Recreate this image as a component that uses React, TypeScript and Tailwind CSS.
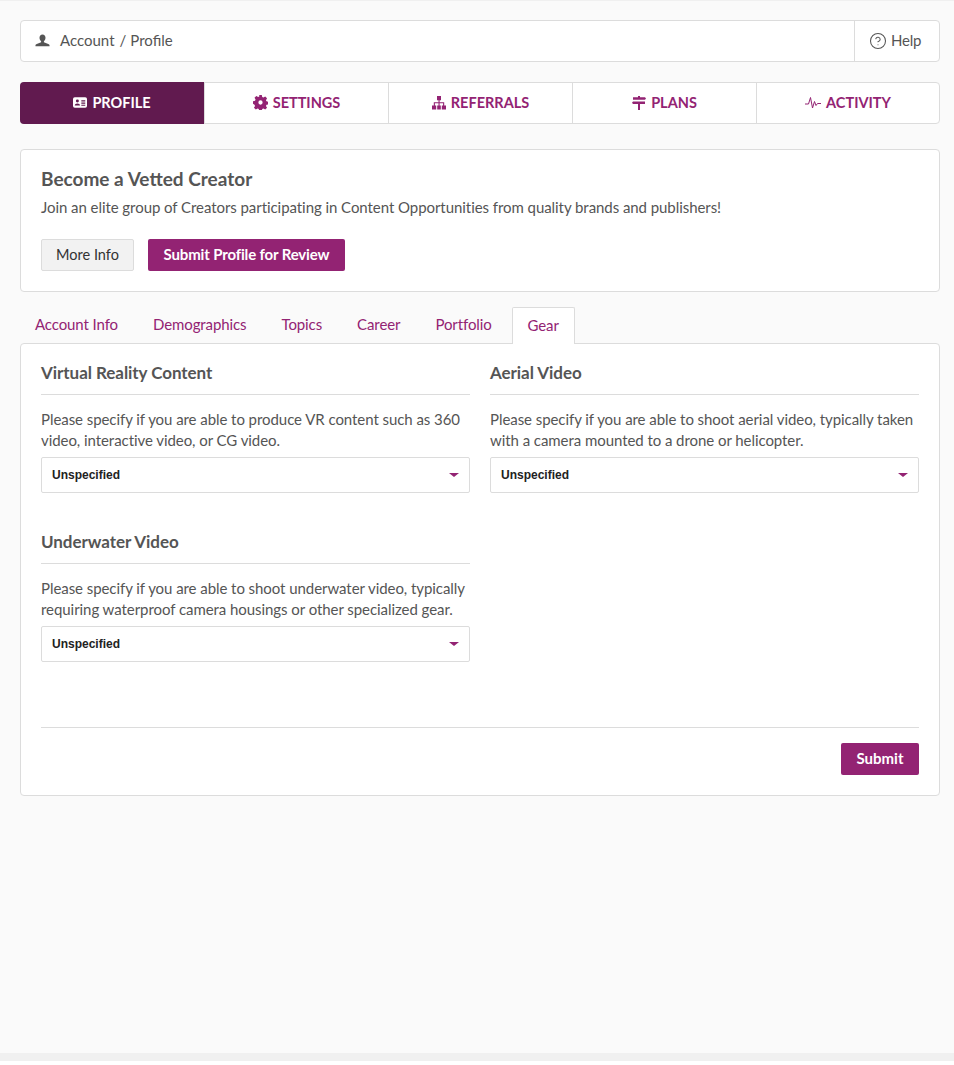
import React from 'react';
import { CircleHelp } from 'lucide-react';

const UserIcon = () => (
    <svg viewBox="0 0 16 16" className="w-[15px] h-[15px] fill-[#555555]">
        <path d="M8 1.500c2 0 3.200 1.500 3.200 3.600 0 1.500-.7 2.900-1.700 3.600v1.200l4.600 1.700c.8.3 1.400.9 1.400 1.700V14H.5v-.7c0-.8.6-1.400 1.400-1.700l4.600-1.700V8.700C5.500 8 4.800 6.600 4.800 5.100 4.800 3 6 1.500 8 1.500z" />
    </svg>
);

const IdCardIcon = () => (
    <svg viewBox="0 0 16 12" className="w-[14px] h-[11px]">
        <rect width="16" height="12" rx="2" fill="#ffffff" />
        <circle cx="5" cy="4.300" r="1.700" fill="#611a4f" />
        <path d="M2 9.500c0-1.700 1.300-2.500 3-2.500s3 .8 3 2.500z" fill="#611a4f" />
        <path d="M9.500 3.500h4.500v1.300H9.500zM9.500 6h4.500v1.300H9.500zM9.500 8.500h4.500v1.300H9.500z" fill="#611a4f" />
    </svg>
);

const GearIcon = () => (
    <svg viewBox="0 0 14 14" className="w-[15px] h-[15px] fill-[#932373]">
        <path fillRule="evenodd" d="M5.800 0h2.400l.4 1.900 1.100.5 1.700-1 1.700 1.700-1 1.700.5 1.100 1.900.4v2.400l-1.900.4-.5 1.100 1 1.700-1.700 1.700-1.700-1-1.100.5-.4 1.900H5.800l-.4-1.900-1.100-.5-1.700 1-1.700-1.700 1-1.700-.5-1.100L0 8.200V5.800l1.900-.4.5-1.100-1-1.700 1.700-1.700 1.700 1 1.100-.5zM7 5a2 2 0 1 0 0 4 2 2 0 0 0 0-4z" />
    </svg>
);

const SitemapIcon = () => (
    <svg viewBox="0 0 14 14" className="w-[14px] h-[14px] fill-[#932373]">
        <path d="M5 0h4v4.200H7.600v2h4.600v3.200H14V13.500H9.800V9.400h1.300V7.300H7.600v2.100h1.200v4.100H5.200V9.400h1.300V7.300H2.900v2.100h1.300v4.100H0V9.400h1.800V6.200h4.700v-2H5z" />
    </svg>
);

const SignsIcon = () => (
    <svg viewBox="0 0 14 14" className="w-[14px] h-[14px] fill-[#932373]">
        <path d="M6 0h2v1.200h5l1 1.300-1 1.300H1V1.200h5zM0 6.800l1-1.300h12v2.600H8V14H6V8.100H1z" />
    </svg>
);

const PulseIcon = () => (
    <svg viewBox="0 0 16 14" fill="none" stroke="#932373" strokeWidth="1" className="w-[16px] h-[14px]">
        <path d="M0 8h3.500L5.500 1.500 7.500 12 9.500 5.500 11 9.500 12.500 7.500H16" />
    </svg>
);

const navItems = [
    { label: 'PROFILE', icon: <IdCardIcon />, active: true },
    { label: 'SETTINGS', icon: <GearIcon /> },
    { label: 'REFERRALS', icon: <SitemapIcon /> },
    { label: 'PLANS', icon: <SignsIcon /> },
    { label: 'ACTIVITY', icon: <PulseIcon /> },
];

const tabs = ['Account Info', 'Demographics', 'Topics', 'Career', 'Portfolio'];

const GearSelect: React.FC<{ title: string; text: React.ReactNode }> = ({ title, text }) => (
    <div className="w-[429px]">
        <h3 className="h-[42px] border-b border-[#dcdcdc] text-[17px] tracking-[-0.05px] leading-[20px] pt-[10px] font-bold text-[#555555]">{title}</h3>
        <p className="mt-[14px] text-[15px] tracking-[-0.06px] leading-[21px] text-[#555555]">{text}</p>
        <div className="mt-[6px] h-[36px] bg-white border border-[#dcdcdc] rounded-[2px] flex items-center justify-between pl-[10px] pr-[10px]">
            <span className="font-['Liberation_Sans',sans-serif] text-[12px] font-bold text-[#222222]">Unspecified</span>
            <span className="w-0 h-0 border-l-[5px] border-r-[5px] border-t-[4px] border-l-transparent border-r-transparent border-t-[#932373]"></span>
        </div>
    </div>
);

export default function App() {
    return (
        <div className="min-h-[1065px] bg-[#fafafa] font-['Lato',sans-serif] flex flex-col">
            <div className="h-[1px] bg-[#f0f0f0]"></div>
            <div className="flex-1 pl-[20px] pr-[14px] pt-[19px]">
                <div className="h-[42px] bg-white border border-[#dcdcdc] rounded-[4px] flex items-center text-[15px] text-[#555555]">
                    <div className="flex-1 flex items-center pl-[14px] pb-[1px]">
                        <UserIcon />
                        <span className="ml-[10px]">Account</span>
                        <span className="ml-[5px] mr-[4px]">/</span>
                        <span>Profile</span>
                    </div>
                    <div className="w-[85px] h-full border-l border-[#dcdcdc] flex items-center pl-[14px] pb-[1px] gap-[4px]">
                        <CircleHelp className="w-[18px] h-[18px]" strokeWidth={1.4} />
                        <span className="tracking-[-0.2px]">Help</span>
                    </div>
                </div>

                <div className="mt-[20px] h-[42px] bg-white border border-[#dcdcdc] rounded-[4px] flex">
                    {navItems.map((item) => (
                        <div
                            key={item.label}
                            className={`flex items-center justify-center gap-[5px] pb-[1px] text-[14.500px] font-bold ${item.active ? 'w-[184px] -ml-[1px] -my-[1px] rounded-l-[4px] bg-[#611a4f] text-white' : item.label === 'ACTIVITY' ? 'flex-1 border-l border-[#dcdcdc] text-[#932373]' : 'w-[184px] border-l border-[#dcdcdc] text-[#932373]'}`}
                        >
                            {item.icon}
                            <span>{item.label}</span>
                        </div>
                    ))}
                </div>

                <div className="mt-[25px] h-[143px] bg-white border border-[#dcdcdc] rounded-[4px] px-[20px] pt-[18px]">
                    <h2 className="text-[19px] leading-[22px] font-bold text-[#555555]">Become a Vetted Creator</h2>
                    <p className="mt-[7px] text-[15px] tracking-[-0.06px] leading-[21px] text-[#555555]">Join an elite group of Creators participating in Content Opportunities from quality brands and publishers!</p>
                    <div className="mt-[21px] flex gap-[14px]">
                        <button className="h-[32px] w-[93px] pb-[1px] bg-[#f2f2f2] border border-[#dcdcdc] rounded-[2px] text-[14.500px] text-[#333333]">More Info</button>
                        <button className="h-[32px] w-[197px] pb-[1px] bg-[#932373] rounded-[2px] text-[15px] tracking-[-0.15px] font-bold text-white">Submit Profile for Review</button>
                    </div>
                </div>

                <div className="mt-[15px] h-[37px] flex text-[15px] tracking-[-0.1px] text-[#932373] pl-[15px] gap-[35px]">
                    {tabs.map((tab) => (
                        <span key={tab} className="leading-[35px]">{tab}</span>
                    ))}
                    <span className="-ml-[15px] z-10 w-[63px] h-[37px] bg-white border border-[#dcdcdc] border-b-0 rounded-t-[2px] text-center leading-[35px]">Gear</span>
                </div>

                <div className="-mt-[1px] h-[453px] bg-white border border-[#dcdcdc] rounded-[4px] px-[20px] pt-[9px]">
                    <div className="flex justify-between">
                        <GearSelect title="Virtual Reality Content" text={<>Please specify if you are able to produce VR content such as 360<br />video, interactive video, or CG video.</>} />
                        <GearSelect title="Aerial Video" text={<>Please specify if you are able to shoot aerial video, typically taken<br />with a camera mounted to a drone or helicopter.</>} />
                    </div>
                    <div className="mt-[29px]">
                        <GearSelect title="Underwater Video" text={<>Please specify if you are able to shoot underwater video, typically<br />requiring waterproof camera housings or other specialized gear.</>} />
                    </div>
                    <div className="mt-[65px] border-t border-[#dcdcdc] pt-[15px] flex justify-end">
                        <button className="h-[32px] w-[78px] pb-[1px] bg-[#932373] rounded-[2px] text-[15px] font-bold text-white">Submit</button>
                    </div>
                </div>
            </div>
            <div className="h-[8px] bg-[#f0f0f0]"></div>
            <div className="h-[4px] bg-white"></div>
        </div>
    );
}
